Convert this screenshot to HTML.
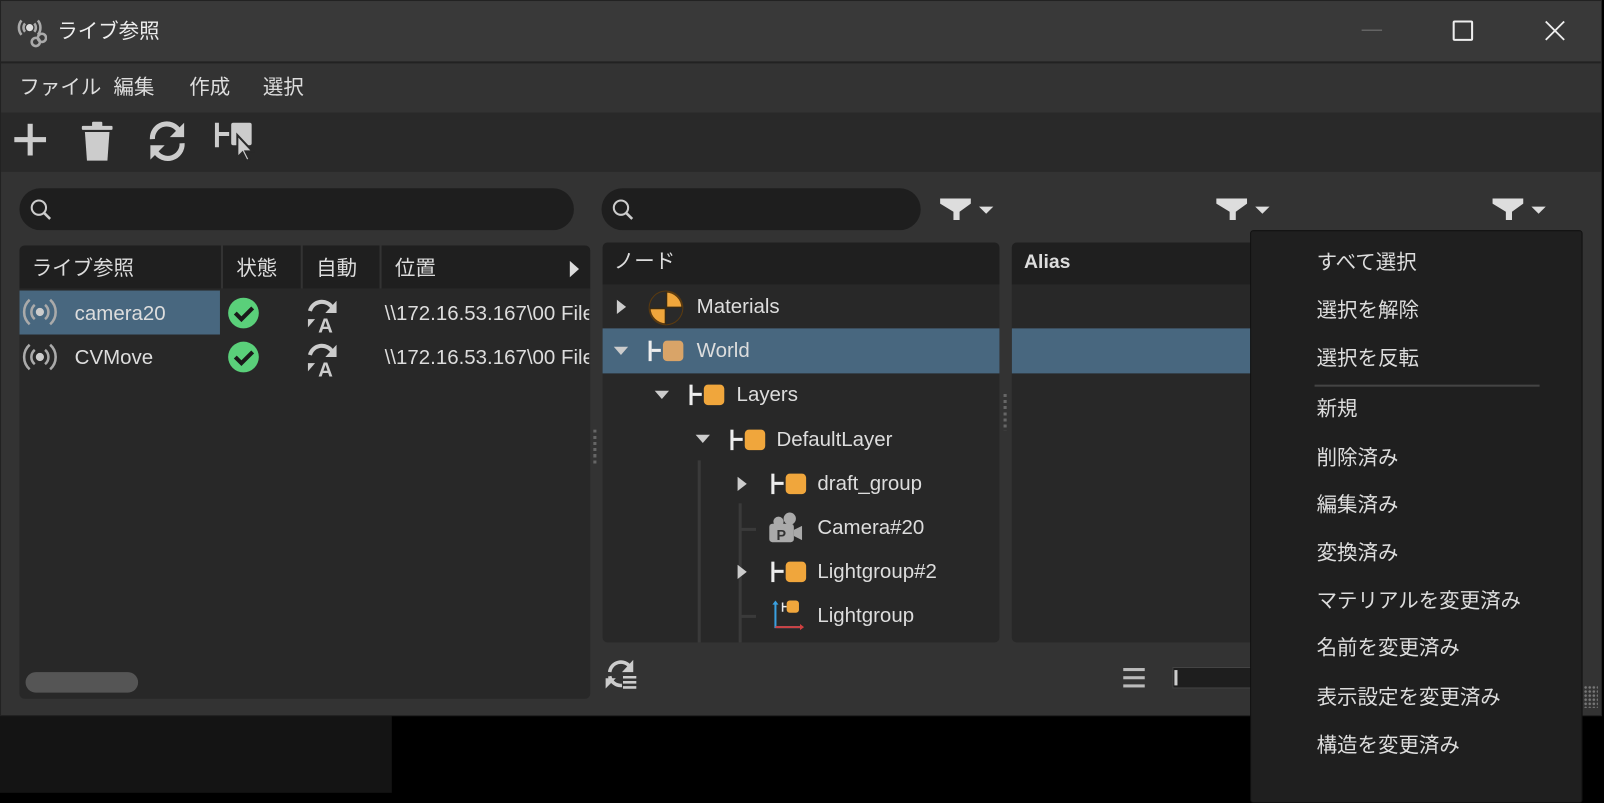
<!DOCTYPE html>
<html><head><meta charset="utf-8"><style>
*{margin:0;padding:0;box-sizing:border-box}
body{width:1604px;height:775px;background:#000;position:relative;overflow:hidden;font-family:"Liberation Sans","Noto Sans CJK JP",sans-serif;color:#ddd;font-size:20px}
#w{position:absolute;left:0;top:0;width:1568px;height:758px;transform:scale(1.023);transform-origin:0 0}
.a{position:absolute}
.t{position:absolute;white-space:nowrap;line-height:24px}
.sq{position:absolute;width:20px;height:20px;background:#f0a63c;border-radius:4px}
.hb{position:absolute;width:11px;height:20px;border-left:3px solid #eee}
.hb:after{content:"";position:absolute;left:0;top:8px;width:9px;height:3px;background:#eee}
.tri-r{position:absolute;width:0;height:0;border-top:7px solid transparent;border-bottom:7px solid transparent;border-left:9px solid #ccc}
.tri-d{position:absolute;width:0;height:0;border-left:7px solid transparent;border-right:7px solid transparent;border-top:8px solid #ccc}
.mi{position:absolute;left:1287px;font-size:20px;color:#ddd;line-height:24px}
</style></head><body><div id="w">
<div class="a" style="left:0;top:700px;width:383px;height:75px;background:#141414"></div>
<div class="a" style="left:0;top:0;width:1566px;height:700px;background:#333;border:1px solid #222"></div>
<div class="a" style="left:1px;top:1px;width:1564px;height:61px;background:#393939;border-bottom:2px solid #222"></div>
<svg class="a" style="left:16px;top:15px" width="30" height="32" viewBox="0 0 30 32"><g fill="none" stroke="#aaa" stroke-width="2.5"><path d="M5 5a11 11 0 0 0 0 14M21 5a11 11 0 0 1 0 14M8.5 8a6 6 0 0 0 0 8M17.5 8a6 6 0 0 1 0 8"/><circle cx="19" cy="26" r="4"/><circle cx="25" cy="22" r="4"/></g><circle cx="13" cy="12" r="3.5" fill="#ddd"/></svg>
<div class="t" style="left:56px;top:19px;font-size:20px;color:#eee">ライブ参照</div>
<div class="a" style="left:1331px;top:29px;width:20px;height:1px;background:#777"></div>
<div class="a" style="left:1420px;top:20px;width:20px;height:20px;border:2px solid #eee;border-radius:2px"></div>
<svg class="a" style="left:1508px;top:18px" width="24" height="24"><path d="M3 3L21 21M21 3L3 21" stroke="#eee" stroke-width="1.8"/></svg>
<div class="t" style="left:19px;top:74px">ファイル</div>
<div class="t" style="left:111px;top:74px">編集</div>
<div class="t" style="left:185px;top:74px">作成</div>
<div class="t" style="left:257px;top:74px">選択</div>
<div class="a" style="left:1px;top:110px;width:1564px;height:58px;background:#292929"></div>
<div class="a" style="left:14px;top:134px;width:31px;height:5px;background:#ccc"></div>
<div class="a" style="left:27px;top:121px;width:5px;height:31px;background:#ccc"></div>
<svg class="a" style="left:79px;top:118px" width="36" height="42"><rect x="1" y="5" width="30" height="4" rx="1" fill="#ccc"/><rect x="11" y="1" width="10" height="5" rx="1" fill="#ccc"/><path d="M4 11h24l-2 28h-20z" fill="#ccc"/></svg>
<svg class="a" style="left:142px;top:118px" width="44" height="40" viewBox="0 0 44 40"><g fill="none" stroke="#ccc" stroke-width="5"><path d="M7 18a14 14 0 0 1 26-8"/><path d="M36 22a14 14 0 0 1-26 8"/></g><path d="M38 2v14h-14z" fill="#ccc"/><path d="M5 38v-14h14z" fill="#ccc"/></svg>
<svg class="a" style="left:210px;top:118px" width="44" height="44"><path d="M2 2v24M2 13h12" stroke="#ccc" stroke-width="4"/><rect x="16" y="2" width="20" height="22" rx="2" fill="#ccc"/><path d="M22 14l0 22 5-5 4 8 3-1-4-8 7 0z" fill="#ccc" stroke="#292929" stroke-width="2"/></svg>
<div class="a" style="left:19px;top:184px;width:542px;height:41px;background:#1e1e1e;border-radius:21px"></div>
<svg class="a" style="left:29px;top:194px" width="24" height="24"><circle cx="9" cy="9" r="7" fill="none" stroke="#ccc" stroke-width="2"/><path d="M14 14l6 6" stroke="#ccc" stroke-width="2.5"/></svg>
<div class="a" style="left:588px;top:184px;width:312px;height:41px;background:#1e1e1e;border-radius:21px"></div>
<svg class="a" style="left:598px;top:194px" width="24" height="24"><circle cx="9" cy="9" r="7" fill="none" stroke="#ccc" stroke-width="2"/><path d="M14 14l6 6" stroke="#ccc" stroke-width="2.5"/></svg>
<svg class="a" style="left:918px;top:193px" width="56" height="24"><path d="M1 1h30v5l-11 8v8h-6v-8l-13-8z" fill="#ddd"/><path d="M39 9h14l-7 7z" fill="#ddd"/></svg>
<svg class="a" style="left:1188px;top:193px" width="56" height="24"><path d="M1 1h30v5l-11 8v8h-6v-8l-13-8z" fill="#ddd"/><path d="M39 9h14l-7 7z" fill="#ddd"/></svg>
<svg class="a" style="left:1458px;top:193px" width="56" height="24"><path d="M1 1h30v5l-11 8v8h-6v-8l-13-8z" fill="#ddd"/><path d="M39 9h14l-7 7z" fill="#ddd"/></svg>
<div class="a" style="left:19px;top:240px;width:558px;height:443px;background:#282828;border-radius:5px;overflow:hidden">
 <div class="a" style="left:0;top:0;width:558px;height:42px;background:#1f1f1f"></div>
 <div class="a" style="left:197px;top:0;width:2px;height:42px;background:#333"></div>
 <div class="a" style="left:275px;top:0;width:2px;height:42px;background:#333"></div>
 <div class="a" style="left:352px;top:0;width:2px;height:42px;background:#333"></div>
 <div class="a" style="left:0;top:44px;width:196px;height:43px;background:#48677f"></div>
 <div class="a" style="left:6px;top:417px;width:110px;height:20px;background:#555;border-radius:10px"></div>
</div>
<div class="t" style="left:31px;top:251px">ライブ参照</div>
<div class="t" style="left:231px;top:251px">状態</div>
<div class="t" style="left:309px;top:251px">自動</div>
<div class="t" style="left:386px;top:251px">位置</div>
<div class="a" style="left:557px;top:255px;border-top:8px solid transparent;border-bottom:8px solid transparent;border-left:9px solid #ddd"></div>
<svg class="a" style="left:22px;top:290px" width="34" height="30"><g fill="none" stroke="#aaa" stroke-width="2.5"><path d="M7 3a16 16 0 0 0 0 24M27 3a16 16 0 0 1 0 24M12 8a9 9 0 0 0 0 14M22 8a9 9 0 0 1 0 14"/></g><circle cx="17" cy="15" r="4" fill="#ccc"/></svg>
<div class="t" style="left:73px;top:295px">camera20</div>
<svg class="a" style="left:22px;top:334px" width="34" height="30"><g fill="none" stroke="#aaa" stroke-width="2.5"><path d="M7 3a16 16 0 0 0 0 24M27 3a16 16 0 0 1 0 24M12 8a9 9 0 0 0 0 14M22 8a9 9 0 0 1 0 14"/></g><circle cx="17" cy="15" r="4" fill="#ccc"/></svg>
<div class="t" style="left:73px;top:338px">CVMove</div>
<svg class="a" style="left:222px;top:290px" width="34" height="34"><circle cx="16" cy="16" r="15" fill="#5ad07a"/><path d="M8 16l6 6 11-11" fill="none" stroke="#1a1a1a" stroke-width="4"/></svg>
<svg class="a" style="left:222px;top:333px" width="34" height="34"><circle cx="16" cy="16" r="15" fill="#5ad07a"/><path d="M8 16l6 6 11-11" fill="none" stroke="#1a1a1a" stroke-width="4"/></svg>
<svg class="a" style="left:298px;top:290px" width="36" height="36"><path d="M5 14a12 12 0 0 1 22-3" fill="none" stroke="#ccc" stroke-width="4"/><path d="M31 4v12h-11z" fill="#ccc"/><path d="M3 22l7 0-7 8z" fill="#ccc"/><text x="13" y="35" font-size="20" font-family="Liberation Sans" font-weight="bold" fill="#ccc">A</text></svg>
<svg class="a" style="left:298px;top:333px" width="36" height="36"><path d="M5 14a12 12 0 0 1 22-3" fill="none" stroke="#ccc" stroke-width="4"/><path d="M31 4v12h-11z" fill="#ccc"/><path d="M3 22l7 0-7 8z" fill="#ccc"/><text x="13" y="35" font-size="20" font-family="Liberation Sans" font-weight="bold" fill="#ccc">A</text></svg>
<div class="a" style="left:376px;top:284px;width:200px;height:86px;overflow:hidden"><div class="t" style="left:0;top:11px">\\172.16.53.167\00 Files</div><div class="t" style="left:0;top:54px">\\172.16.53.167\00 Files</div></div>
<div class="a" style="left:580px;top:420px;width:3px;height:36px;background:repeating-linear-gradient(#666 0 3px,transparent 3px 6px)"></div>
<div class="a" style="left:981px;top:385px;width:3px;height:36px;background:repeating-linear-gradient(#666 0 3px,transparent 3px 6px)"></div>
<div class="a" style="left:589px;top:237px;width:388px;height:391px;background:#282828;border-radius:5px;overflow:hidden">
 <div class="a" style="left:0;top:0;width:388px;height:41px;background:#1f1f1f"></div>
 <div class="a" style="left:0;top:84px;width:388px;height:44px;background:#48677f"></div>
 <div class="a" style="left:93px;top:213px;width:3px;height:178px;background:#3a3a3a"></div>
 <div class="a" style="left:133px;top:255px;width:3px;height:136px;background:#3a3a3a"></div>
 <div class="a" style="left:135px;top:279px;width:15px;height:3px;background:#3a3a3a"></div>
 <div class="a" style="left:135px;top:364px;width:15px;height:3px;background:#3a3a3a"></div>
</div>
<div class="t" style="left:600px;top:244px">ノード</div>
<div class="tri-r" style="left:603px;top:293px"></div>
<svg class="a" style="left:633px;top:283px" width="36" height="36"><circle cx="18" cy="18" r="16" fill="#f0a63c" stroke="#5a3a10" stroke-width="2"/><path d="M2 18h32M18 2v32" stroke="#3a2a10" stroke-width="2.5"/><path d="M18 18h16a16 16 0 0 1-16 16z M18 18h-16a16 16 0 0 1 16-16z" fill="#2a2a2a"/></svg>
<div class="t" style="left:681px;top:288px">Materials</div>
<div class="tri-d" style="left:600px;top:339px"></div>
<div class="hb" style="left:634px;top:333px"></div><div class="sq" style="left:648px;top:333px;background:#d9a468"></div>
<div class="t" style="left:681px;top:331px">World</div>
<div class="tri-d" style="left:640px;top:382px"></div>
<div class="hb" style="left:674px;top:376px"></div><div class="sq" style="left:688px;top:376px"></div>
<div class="t" style="left:720px;top:374px">Layers</div>
<div class="tri-d" style="left:680px;top:425px"></div>
<div class="hb" style="left:714px;top:420px"></div><div class="sq" style="left:728px;top:420px"></div>
<div class="t" style="left:759px;top:418px">DefaultLayer</div>
<div class="tri-r" style="left:721px;top:466px"></div>
<div class="hb" style="left:754px;top:463px"></div><div class="sq" style="left:768px;top:463px"></div>
<div class="t" style="left:799px;top:461px">draft_group</div>
<svg class="a" style="left:750px;top:500px" width="36" height="32"><circle cx="22" cy="7" r="6" fill="#aaa"/><circle cx="11" cy="10" r="5" fill="#aaa"/><rect x="2" y="12" width="24" height="18" rx="3" fill="#aaa"/><path d="M26 18l8-4v14l-8-4z" fill="#aaa"/><text x="9" y="28" font-size="14" font-weight="bold" font-family="Liberation Sans" fill="#333">P</text></svg>
<div class="t" style="left:799px;top:504px">Camera#20</div>
<div class="tri-r" style="left:721px;top:552px"></div>
<div class="hb" style="left:754px;top:549px"></div><div class="sq" style="left:768px;top:549px"></div>
<div class="t" style="left:799px;top:547px">Lightgroup#2</div>
<svg class="a" style="left:750px;top:585px" width="36" height="32"><path d="M8 4v24h24" fill="none" stroke="#3aa0e0" stroke-width="2"/><path d="M8 28h24" stroke="#d04040" stroke-width="2"/><path d="M32 25l4 3-4 3z" fill="#d04040"/><path d="M5 6l3-4 3 4z" fill="#3aa0e0"/><path d="M15 4v9M15 8h4" stroke="#eee" stroke-width="1.5"/><rect x="19" y="2" width="12" height="12" rx="3" fill="#f0a63c"/></svg>
<div class="t" style="left:799px;top:590px">Lightgroup</div>
<div class="a" style="left:989px;top:237px;width:545px;height:391px;background:#282828;border-radius:5px;overflow:hidden">
 <div class="a" style="left:0;top:0;width:545px;height:41px;background:#1f1f1f"></div>
 <div class="a" style="left:0;top:84px;width:545px;height:44px;background:#48677f"></div>
</div>
<div class="t" style="left:1001px;top:245px;font-weight:bold;font-size:19px">Alias</div>
<svg class="a" style="left:590px;top:643px" width="36" height="32"><g fill="none" stroke="#ccc" stroke-width="3.5"><path d="M6 14a11 11 0 0 1 20-5"/><path d="M6 18a11 11 0 0 0 12 9"/></g><path d="M29 2v12h-11z" fill="#ccc"/><path d="M2 30v-10h10z" fill="#ccc"/><path d="M19 19h13M19 24h13M19 29h13" stroke="#ccc" stroke-width="2.5"/></svg>
<div class="a" style="left:1098px;top:653px;width:21px;height:3px;background:#bbb;box-shadow:0 8px 0 #bbb,0 16px 0 #bbb"></div>
<div class="a" style="left:1146px;top:652px;width:90px;height:21px;background:#1e1e1e;border:1px solid #444"></div>
<div class="a" style="left:1148px;top:655px;width:3px;height:15px;background:#ccc"></div>
<div class="a" style="left:1548px;top:670px;width:14px;height:22px;background:radial-gradient(circle,#777 1px,transparent 1.5px) 0 0/4px 4px"></div>
<div class="a" style="left:1222px;top:225px;width:325px;height:560px;background:#1f1f1f;border:1px solid #111;border-radius:3px"></div>
<div class="mi" style="top:245px">すべて選択</div>
<div class="mi" style="top:292px">選択を解除</div>
<div class="mi" style="top:339px">選択を反転</div>
<div class="a" style="left:1285px;top:376px;width:220px;height:2px;background:#444"></div>
<div class="mi" style="top:388px">新規</div>
<div class="mi" style="top:436px">削除済み</div>
<div class="mi" style="top:482px">編集済み</div>
<div class="mi" style="top:529px">変換済み</div>
<div class="mi" style="top:576px">マテリアルを変更済み</div>
<div class="mi" style="top:622px">名前を変更済み</div>
<div class="mi" style="top:670px">表示設定を変更済み</div>
<div class="mi" style="top:717px">構造を変更済み</div>
</div></body></html>
